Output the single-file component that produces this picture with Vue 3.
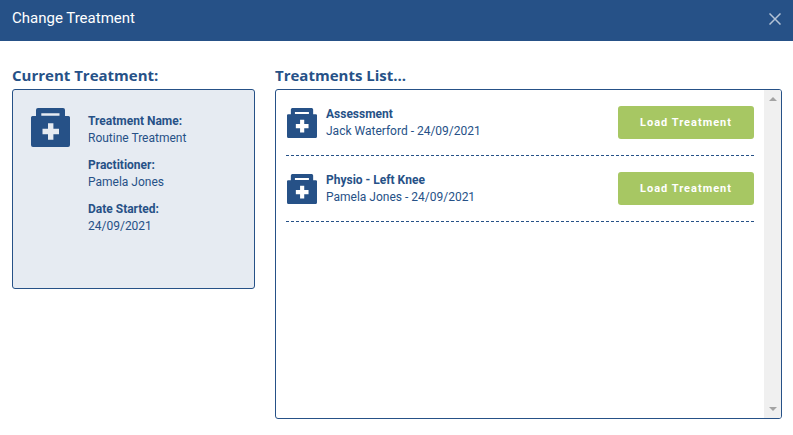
<script setup>
import { h } from 'vue'

const current = [
  { label: 'Treatment Name:', value: 'Routine Treatment' },
  { label: 'Practitioner:', value: 'Pamela Jones' },
  { label: 'Date Started:', value: '24/09/2021' },
]

const treatments = [
  { name: 'Assessment', practitioner: 'Jack Waterford', date: '24/09/2021' },
  { name: 'Physio - Left Knee', practitioner: 'Pamela Jones', date: '24/09/2021' },
]

// Medical kit: handle with slot, body with a cut-out cross
const KitIcon = () =>
  h('svg', { viewBox: '0 0 39 39', 'aria-hidden': 'true' }, [
    h('path', {
      fill: 'currentColor',
      'fill-rule': 'evenodd',
      d: 'M7 0H32Q34 0 34 2V8H37.5Q39 8 39 9.5V37Q39 39 37 39H2Q0 39 0 37V9.5Q0 8 1.5 8H5V2Q5 0 7 0ZM10.3 5.2V7.8H28.5V5.2ZM17 15.3V20.7H11.5V26.3H17V31.7H22.4V26.3H28V20.7H22.4V15.3Z',
    }),
  ])
</script>

<template>
  <div class="dialog">
    <header class="header">
      <h1 class="title">Change Treatment</h1>
      <button class="close" type="button" aria-label="Close">
        <svg viewBox="0 0 12 12" aria-hidden="true">
          <path d="M0.5 0.5L11.5 11.5M11.5 0.5L0.5 11.5" />
        </svg>
      </button>
    </header>

    <main class="content">
      <section>
        <h2 class="heading">Current Treatment:</h2>
        <div class="card">
          <KitIcon class="kit-large" />
          <dl class="details">
            <div v-for="item in current" :key="item.label">
              <dt>{{ item.label }}</dt>
              <dd>{{ item.value }}</dd>
            </div>
          </dl>
        </div>
      </section>

      <section>
        <h2 class="heading">Treatments List...</h2>
        <div class="list-box">
          <ul class="list">
            <li v-for="t in treatments" :key="t.name" class="row">
              <KitIcon class="kit-small" />
              <div class="info">
                <strong>{{ t.name }}</strong>
                <span>{{ t.practitioner }} - {{ t.date }}</span>
              </div>
              <button class="load" type="button">Load Treatment</button>
            </li>
          </ul>
          <div class="scrollbar" aria-hidden="true">
            <svg viewBox="0 0 8 4"><path d="M0 4L4 0L8 4Z" /></svg>
            <svg viewBox="0 0 8 4"><path d="M0 0L4 4L8 0Z" /></svg>
          </div>
        </div>
      </section>
    </main>
  </div>
</template>

<style>
body {
  background: #fff;
}
</style>

<style scoped>
.dialog {
  color: #265187;
  font-family: Roboto, "Liberation Sans", sans-serif;
  font-size: 12px;
  line-height: 17px;
}

.header {
  display: flex;
  align-items: flex-start;
  justify-content: space-between;
  padding: 8px 12px 9px;
  background: #265187;
  color: #fff;
}

.title {
  margin: 0;
  font-size: 15px;
  font-weight: 400;
  line-height: 20px;
}

.close {
  display: flex;
  padding: 5px 0 7px;
  border: 0;
  background: none;
  color: #b4c3d6;
  cursor: pointer;
}

.close svg {
  width: 12px;
  height: 12px;
  fill: none;
  stroke: currentColor;
  stroke-width: 1.5;
}

.content {
  display: grid;
  grid-template-columns: 243fr 507fr;
  align-items: start;
  gap: 20px;
  padding: 24px 11px 16px 12px;
}

.heading {
  margin: 0 0 4px;
  font-family: "Open Sans", sans-serif;
  font-size: 15px;
  font-weight: 700;
  line-height: 20px;
}

.card {
  box-sizing: border-box;
  display: flex;
  align-items: flex-start;
  gap: 18px;
  min-height: 200px;
  padding: 18px;
  border: 1px solid #265187;
  border-radius: 3px;
  background: #e6ebf2;
}

.kit-large {
  flex: none;
  width: 39px;
  height: 39px;
}

.details {
  display: grid;
  gap: 10px;
  margin: 5px 0 0;
}

.details dt,
.info strong {
  font-weight: 700;
}

.details dd {
  margin: 0;
}

.list-box {
  box-sizing: border-box;
  display: flex;
  min-height: 330px;
  border: 1px solid #265187;
  border-radius: 3px;
  overflow: hidden;
}

.list {
  flex: 1;
  margin: 0;
  padding: 0 10px;
  list-style: none;
}

.row {
  display: flex;
  align-items: center;
  padding: 16px 0;
  border-bottom: 1px dashed #265187;
}

.kit-small {
  flex: none;
  width: 30px;
  height: 30px;
  margin: 0 9px 0 1px;
}

.info {
  display: grid;
  flex: 1;
  margin: -1px 0;
}

.load {
  padding: 8px 22px;
  border: 0;
  border-radius: 3px;
  background: #a7c763;
  color: #fff;
  font-family: Roboto, "Liberation Sans", sans-serif;
  font-size: 11px;
  font-weight: 700;
  line-height: 17px;
  letter-spacing: 1px;
  cursor: pointer;
}

.scrollbar {
  box-sizing: border-box;
  display: flex;
  flex-direction: column;
  align-items: center;
  justify-content: space-between;
  width: 17px;
  padding: 7px 0;
  background: #f0f0f0;
}

.scrollbar svg {
  width: 8px;
  height: 4px;
  fill: #a3a3a3;
}
</style>
